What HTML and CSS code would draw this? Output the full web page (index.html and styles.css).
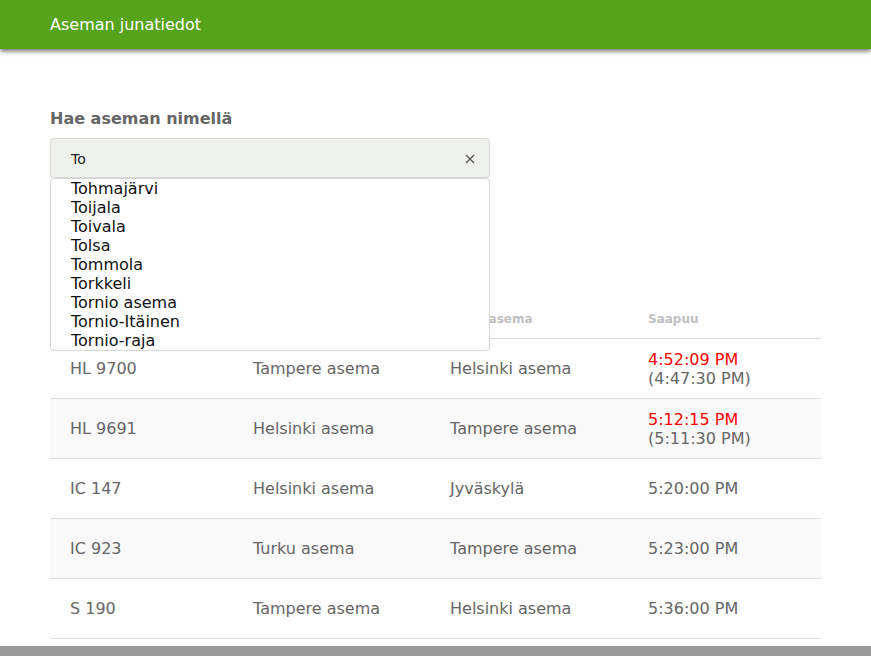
FILE: index.html
```html
<!DOCTYPE html>
<html lang="fi">
<head>
<meta charset="utf-8">
<title>Aseman junatiedot</title>
<link rel="stylesheet" href="styles.css">
</head>
<body>
<header class="topbar">
  <div class="topbar-title">Aseman junatiedot</div>
</header>
<main class="content">
  <label class="search-label" for="station">Hae aseman nimellä</label>
  <div class="search">
    <div class="search-input">
      <span class="search-value">To</span>
      <svg class="clear" width="10" height="10" viewBox="0 0 10 10"><path d="M1 1 L9 9 M9 1 L1 9" stroke="#555" stroke-width="1.3" fill="none"/></svg>
    </div>
    <ul class="suggestions">
      <li>Tohmajärvi</li>
      <li>Toijala</li>
      <li>Toivala</li>
      <li>Tolsa</li>
      <li>Tommola</li>
      <li>Torkkeli</li>
      <li>Tornio asema</li>
      <li>Tornio-Itäinen</li>
      <li>Tornio-raja</li>
    </ul>
  </div>
  <table class="trains">
    <colgroup>
      <col class="c1"><col class="c2"><col class="c3"><col class="c4">
    </colgroup>
    <thead>
      <tr><th>Juna</th><th>Lähtöasema</th><th>Pääteasema</th><th>Saapuu</th></tr>
    </thead>
    <tbody>
      <tr><td>HL 9700</td><td>Tampere asema</td><td>Helsinki asema</td><td><span class="late">4:52:09 PM</span><br>(4:47:30 PM)</td></tr>
      <tr><td>HL 9691</td><td>Helsinki asema</td><td>Tampere asema</td><td><span class="late">5:12:15 PM</span><br>(5:11:30 PM)</td></tr>
      <tr><td>IC 147</td><td>Helsinki asema</td><td>Jyväskylä</td><td>5:20:00 PM</td></tr>
      <tr><td>IC 923</td><td>Turku asema</td><td>Tampere asema</td><td>5:23:00 PM</td></tr>
      <tr><td>S 190</td><td>Tampere asema</td><td>Helsinki asema</td><td>5:36:00 PM</td></tr>
    </tbody>
  </table>
</main>
<div class="scrollbar"></div>
</body>
</html>
```

FILE: styles.css
```css
html, body {
  margin: 0;
  padding: 0;
  background: #fff;
  font-family: "DejaVu Sans", sans-serif;
  overflow: hidden;
}

.topbar {
  height: 49px;
  background: #57a31b;
  box-shadow: 0 2px 5px rgba(0, 0, 0, 0.6);
  display: flex;
  align-items: center;
  padding-left: 50px;
  position: relative;
  z-index: 2;
}

.topbar-title {
  color: #fff;
  font-size: 16px;
  margin-top: -1px;
}

.content {
  margin: 0 50px;
  padding-top: 60px;
  width: 771px;
}

.search-label {
  display: block;
  font-size: 16px;
  font-weight: bold;
  color: #666;
  line-height: 19px;
  margin-bottom: 10px;
}

.search {
  position: relative;
  width: 440px;
  margin-bottom: 122px;
}

.search-input {
  box-sizing: border-box;
  height: 40px;
  background: #eef1ec;
  border: 1px solid #d8dbd6;
  border-radius: 4px;
  display: flex;
  align-items: center;
  justify-content: space-between;
  padding: 1px 14px 0 20px;
}

.search-value {
  font-size: 14px;
  color: #222;
}

.clear {
  display: block;
}

.suggestions {
  position: absolute;
  top: 40px;
  left: 0;
  right: 0;
  margin: 0;
  padding: 0;
  list-style: none;
  background: #fff;
  border: 1px solid #d6d6d6;
  border-radius: 4px;
  z-index: 3;
}

.suggestions li {
  font-size: 16px;
  line-height: 19px;
  color: #111;
  padding-left: 20px;
}

.trains {
  width: 771px;
  border-collapse: collapse;
  table-layout: fixed;
}

.c1 { width: 183px; }
.c2 { width: 197px; }
.c3 { width: 198px; }
.c4 { width: 193px; }

.trains th {
  height: 38px;
  box-sizing: border-box;
  text-align: left;
  font-size: 12px;
  font-weight: bold;
  color: #bfbfbf;
  padding: 1px 0 0 20px;
  border-bottom: 1px solid #ddd;
}

.trains td {
  height: 60px;
  box-sizing: border-box;
  font-size: 16px;
  line-height: 19px;
  color: #666;
  padding: 1px 0 0 20px;
  border-bottom: 1px solid #ddd;
  vertical-align: middle;
}

.trains tbody tr:nth-child(even) {
  background: #f9f9f9;
}

.late {
  color: #ff0000;
}

.scrollbar {
  position: fixed;
  left: 0;
  right: 0;
  bottom: 0;
  height: 10px;
  background: #9a9a9a;
}
```
